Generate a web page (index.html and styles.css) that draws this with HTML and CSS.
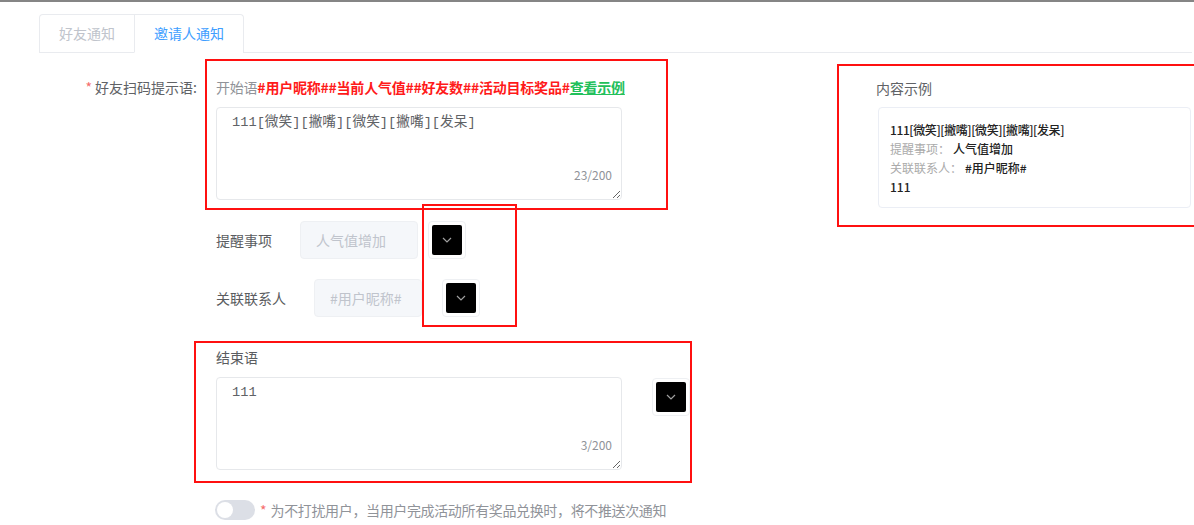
FILE: index.html
```html
<!DOCTYPE html>
<html lang="zh-CN">
<head>
<meta charset="utf-8">
<title>邀请人通知</title>
<link rel="stylesheet" href="styles.css">
</head>
<body>
<div class="page">
  <div class="tabs">
    <div class="tab-group">
      <div class="tab">好友通知</div>
      <div class="tab active">邀请人通知</div>
    </div>
  </div>

  <div class="main">
    <div class="form">
      <div class="field">
        <label class="field-label"><span class="req">*</span> 好友扫码提示语:</label>
        <div class="mark mark-start">
          <div class="hint">开始语<b class="var">#用户昵称##当前人气值##好友数##活动目标奖品#</b><a class="example">查看示例</a></div>
          <div class="ta-wrap">
            <textarea class="ta">111[微笑][撇嘴][微笑][撇嘴][发呆]</textarea>
            <span class="count">23/200</span>
          </div>
        </div>
      </div>

      <div class="sub-rows">
        <div class="sub-row">
          <span class="sub-label">提醒事项</span>
          <div class="fake-input w118">人气值增加</div>
          <div class="pick gap10"><span class="pick-inner"><svg width="10" height="6" viewBox="0 0 10 6"><path d="M1 1 L5 5 L9 1" fill="none" stroke="#a0a0a0" stroke-width="1.2"/></svg></span></div>
        </div>
        <div class="sub-row">
          <span class="sub-label">关联联系人</span>
          <div class="fake-input w108">#用户昵称#</div>
          <div class="pick gap20"><span class="pick-inner"><svg width="10" height="6" viewBox="0 0 10 6"><path d="M1 1 L5 5 L9 1" fill="none" stroke="#a0a0a0" stroke-width="1.2"/></svg></span></div>
        </div>
        <div class="mark mark-btns"></div>
      </div>

      <div class="mark mark-end">
        <div class="end-title">结束语</div>
        <div class="end-row">
          <div class="ta-wrap">
            <textarea class="ta">111</textarea>
            <span class="count">3/200</span>
          </div>
          <div class="pick end-pick"><span class="pick-inner"><svg width="10" height="6" viewBox="0 0 10 6"><path d="M1 1 L5 5 L9 1" fill="none" stroke="#a0a0a0" stroke-width="1.2"/></svg></span></div>
        </div>
      </div>

      <div class="notice">
        <span class="switch"><span class="knob"></span></span>
        <span class="notice-star">*</span>
        <span class="notice-text">为不打扰用户，当用户完成活动所有奖品兑换时，将不推送次通知</span>
      </div>
    </div>

    <div class="mark preview">
      <div class="preview-title">内容示例</div>
      <div class="preview-card">
        <div class="pv-strong pv-first">111[微笑][撇嘴][微笑][撇嘴][发呆]</div>
        <div><span class="pv-key">提醒事项：</span><span class="pv-strong">人气值增加</span></div>
        <div><span class="pv-key">关联联系人：</span><span class="pv-strong">#用户昵称#</span></div>
        <div class="pv-strong">111</div>
      </div>
    </div>
  </div>
</div>
</body>
</html>
```

FILE: styles.css
```css
* { box-sizing: border-box; }
html, body {
  margin: 0;
  padding: 0;
  background: #fff;
  overflow: hidden;
}
body {
  font-family: "Noto Sans CJK SC", "Noto Sans", "Liberation Sans", sans-serif;
  font-size: 14px;
  color: #606266;
  width: 1194px;
  height: 525px;
}
.page {
  border-top: 2px solid #858585;
  height: 525px;
}

/* tabs */
.tabs {
  margin: 12px 2px 0 39px;
  border-bottom: 1px solid #e9ebef;
  display: flex;
}
.tab-group {
  display: flex;
  border: 1px solid #e9ebef;
  border-bottom: none;
  border-radius: 4px 4px 0 0;
  margin-bottom: -1px;
}
.tab {
  height: 38px;
  line-height: 37px;
  padding: 0 19px;
  font-size: 14px;
  color: #c0c4cc;
  border-bottom: 1px solid #e9ebef;
}
.tab + .tab { border-left: 1px solid #e9ebef; }
.tab.active {
  color: #409eff;
  border-bottom-color: #fff;
}

/* layout */
.main {
  display: flex;
  align-items: flex-start;
}
.form {
  flex: 0 0 837px;
  display: flex;
  flex-direction: column;
  align-items: flex-start;
}
.mark { border: 2px solid #ff1010; }

/* first field */
.field {
  display: flex;
  align-items: flex-start;
  margin-top: 6px;
}
.field-label {
  width: 205px;
  padding-right: 8px;
  text-align: right;
  line-height: 40px;
  margin-top: 8px;
  color: #606266;
}
.req { color: #f56c6c; }
.mark-start {
  width: 463px;
  height: 151px;
  padding: 6px 44px 8px 9px;
}
.hint {
  line-height: 40px;
  height: 40px;
  color: #909399;
  white-space: nowrap;
  letter-spacing: -0.22px;
}
.var { color: #ff1a1a; font-weight: 700; }
.example {
  color: #22c05a;
  font-weight: 700;
  text-decoration: underline;
}

.ta-wrap {
  position: relative;
  width: 406px;
  height: 93px;
}
.ta {
  display: block;
  width: 406px;
  height: 93px;
  margin: 0;
  padding: 5px 15px;
  border: 1px solid #e6e8eb;
  border-radius: 4px;
  font-family: "Liberation Mono", "Noto Sans CJK SC", monospace;
  font-size: 13.7px;
  line-height: 20px;
  color: #606266;
  background: #fff;
  resize: vertical;
  outline: none;
}
.count {
  position: absolute;
  right: 10px;
  bottom: 15px;
  font-size: 12px;
  line-height: 20px;
  color: #909399;
}

/* sub rows */
.sub-rows {
  position: relative;
  margin-left: 216px;
  margin-top: 11px;
  display: flex;
  flex-direction: column;
  gap: 20px;
}
.sub-row {
  display: flex;
  align-items: center;
  height: 38px;
}
.sub-label {
  margin-right: 28px;
  color: #5a5c60;
}
.fake-input {
  height: 38px;
  line-height: 36px;
  padding-left: 15px;
  background: #f5f7fa;
  border: 1px solid #eef0f3;
  border-radius: 4px;
  color: #c0c4cc;
  white-space: nowrap;
}
.w118 { width: 118px; }
.w108 { width: 108px; }
.gap10 { margin-left: 10px; }
.gap20 { margin-left: 20px; }
.pick {
  width: 38px;
  height: 38px;
  border: 1px solid #eef0f3;
  border-radius: 4px;
  background: #fff;
  display: flex;
  align-items: center;
  justify-content: center;
  flex-shrink: 0;
}
.pick-inner {
  width: 30px;
  height: 30px;
  background: #000;
  border-radius: 2px;
  display: flex;
  align-items: center;
  justify-content: center;
}
.mark-btns {
  position: absolute;
  left: 206px;
  top: -17px;
  width: 95px;
  height: 123px;
}

/* end box */
.mark-end {
  margin-left: 194px;
  margin-top: 24px;
  width: 498px;
  height: 142px;
  padding: 4px 0 10px 20px;
}
.end-title {
  line-height: 20px;
  color: #5a5c60;
}
.end-row {
  display: flex;
  align-items: flex-start;
  margin-top: 10px;
  gap: 30px;
}
.end-pick { margin-top: 1px; }

/* notice */
.notice {
  margin-left: 215px;
  margin-top: 17px;
  display: flex;
  align-items: center;
  height: 20px;
}
.switch {
  position: relative;
  width: 40px;
  height: 20px;
  border-radius: 10px;
  background: #dcdfe6;
}
.knob {
  position: absolute;
  left: 2px;
  top: 2px;
  width: 16px;
  height: 16px;
  border-radius: 50%;
  background: #fff;
}
.notice-star {
  color: #f56c6c;
  margin-left: 5px;
  margin-right: 4px;
}
.notice-text {
  color: #909399;
  white-space: nowrap;
  letter-spacing: -0.36px;
}

/* preview */
.preview {
  flex: 0 0 360px;
  margin-top: 11px;
  height: 163px;
  padding: 12px 0 0 37px;
}
.preview-title {
  line-height: 20px;
  color: #606266;
}
.preview-card {
  margin-top: 9px;
  margin-left: 2px;
  width: 313px;
  height: 101px;
  border: 1px solid #ebeef5;
  border-radius: 4px;
  padding: 12px 11px;
  font-size: 12px;
  line-height: 19px;
  white-space: nowrap;
}
.pv-strong { color: #222; font-weight: 500; }
.pv-first { letter-spacing: -0.4px; }
.pv-key { color: #aaa; margin-right: 3px; }
```
